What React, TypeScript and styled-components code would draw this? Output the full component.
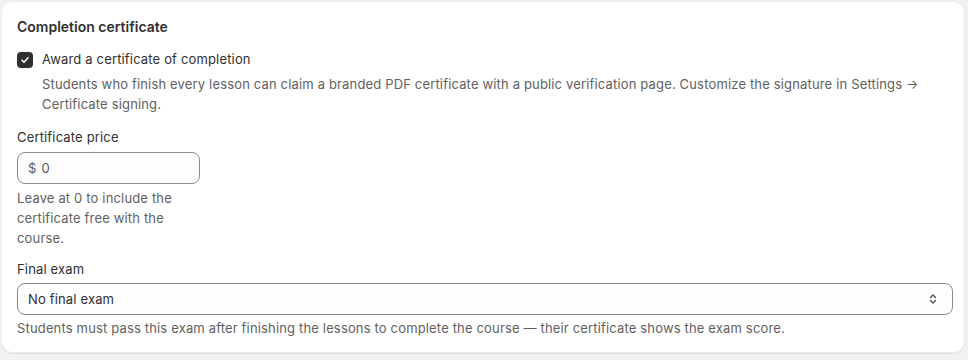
import React from 'react';
import styled, { createGlobalStyle } from 'styled-components';

const GlobalStyle = createGlobalStyle`
  body {
    margin: 0;
    background: #f1f1f1;
    font-family: Inter, "Noto Sans", sans-serif;
    color: #303030;
    -webkit-font-smoothing: antialiased;
  }
`;

const Page = styled.div`
  padding: 1px 3px 7px 1px;
`;

const Card = styled.section`
  background: #ffffff;
  border-radius: 12px;
  box-shadow: 0 1px 0 0 rgba(26, 26, 26, 0.08), inset 0 0 0 1px #ebebeb;
  padding: 16px 12px 15px 16px;
  display: flex;
  flex-direction: column;
  gap: 12px;
  letter-spacing: 0.16px;
`;

const Heading = styled.h2`
  margin: 0;
  font-size: 14px;
  font-weight: 600;
  line-height: 20px;
  letter-spacing: 0;
`;

const CheckRow = styled.div`
  display: grid;
  grid-template-columns: 16px 1fr;
  column-gap: 9px;
  align-items: start;
`;

const Box = styled.span`
  width: 16px;
  height: 16px;
  margin-top: 3px;
  border-radius: 4px;
  background: #303030;
  display: flex;
  align-items: center;
  justify-content: center;
`;

const CheckLabel = styled.div`
  font-size: 13px;
  line-height: 20px;
`;

const Help = styled.p<{ $gap?: number; $narrow?: boolean }>`
  margin: ${p => p.$gap ?? 4}px 0 0;
  font-size: 13px;
  line-height: 20px;
  color: #616161;
  max-width: ${p => (p.$narrow ? '183px' : 'none')};
`;

const Field = styled.div<{ $width?: string; $offset?: number }>`
  display: flex;
  flex-direction: column;
  width: ${p => p.$width ?? 'auto'};
  margin-top: ${p => p.$offset ?? 0}px;
`;

const Label = styled.label<{ $gap?: number }>`
  font-size: 13px;
  line-height: 20px;
  margin-bottom: ${p => p.$gap ?? 4}px;
`;

const InputBox = styled.div`
  height: 32px;
  box-sizing: border-box;
  border: 1px solid #8a8a8a;
  border-radius: 8px;
  background: #fdfdfd;
  display: flex;
  align-items: center;
  padding: 0 11px 0 10px;
  gap: 5px;
  font-size: 13px;
  color: #303030;
`;

const Muted = styled.span`
  color: #5c5c5c;
`;

const SelectBox = styled(InputBox)`
  justify-content: space-between;
`;

const Chevrons = () => (
  <svg width="16" height="16" viewBox="0 0 16 16" fill="none" stroke="#4a4a4a" strokeWidth="1.3" strokeLinecap="round" strokeLinejoin="round">
    <path d="M5.5 6.5 8 4l2.5 2.5" />
    <path d="M5.5 9.5 8 12l2.5-2.5" />
  </svg>
);

export default function App() {
  return (
    <Page>
      <GlobalStyle />
      <Card>
        <Heading>Completion certificate</Heading>
        <CheckRow>
          <Box>
            <svg width="12" height="12" viewBox="0 0 12 12" fill="none" stroke="#fff" strokeWidth="1.6" strokeLinecap="round" strokeLinejoin="round">
              <path d="M3 6.2 5 8.2 9 3.8" />
            </svg>
          </Box>
          <CheckLabel>Award a certificate of completion</CheckLabel>
          <span />
          <Help $gap={5}>
            Students who finish every lesson can claim a branded PDF certificate with a public verification page. Customize the signature in Settings → Certificate signing.
          </Help>
        </CheckRow>
        <Field $width="183px" $offset={1}>
          <Label $gap={5}>Certificate price</Label>
          <InputBox>
            <Muted>$</Muted>
            <Muted>0</Muted>
          </InputBox>
          <Help $narrow>Leave at 0 to include the certificate free with the course.</Help>
        </Field>
        <Field $offset={-1}>
          <Label $gap={4}>Final exam</Label>
          <SelectBox>
            <span>No final exam</span>
            <Chevrons />
          </SelectBox>
          <Help $gap={3}>Students must pass this exam after finishing the lessons to complete the course — their certificate shows the exam score.</Help>
        </Field>
      </Card>
    </Page>
  );
}
